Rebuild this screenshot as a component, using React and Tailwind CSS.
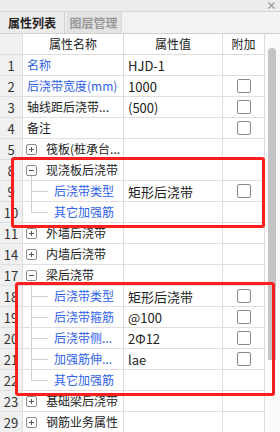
const rows = [
  { n: 1, name: '名称', blue: true, val: 'HJD-1' },
  { n: 2, name: '后浇带宽度(mm)', blue: true, val: '1000', cb: true },
  { n: 3, name: '轴线距后浇带...', val: '(500)', cb: true },
  { n: 4, name: '备注', cb: true },
  { n: 5, name: '筏板(桩承台...', tree: '+' },
  { n: 8, name: '现浇板后浇带', tree: '-' },
  { n: 9, name: '后浇带类型', child: 'mid', val: '矩形后浇带', cb: true },
  { n: 10, name: '其它加强筋', child: 'last' },
  { n: 11, name: '外墙后浇带', tree: '+' },
  { n: 14, name: '内墙后浇带', tree: '+' },
  { n: 17, name: '梁后浇带', tree: '-' },
  { n: 18, name: '后浇带类型', child: 'mid', val: '矩形后浇带', cb: true },
  { n: 19, name: '后浇带箍筋', child: 'mid', val: '@100', cb: true },
  { n: 20, name: '后浇带侧...', child: 'mid', val: '2Φ12', cb: true },
  { n: 21, name: '加强筋伸...', child: 'mid', val: 'lae', cb: true },
  { n: 22, name: '其它加强筋', child: 'last' },
  { n: 23, name: '基础梁后浇带', tree: '+' },
  { n: 29, name: '钢筋业务属性', tree: '+' },
];

const TreeBox = ({ sign }) => (
  <span className="w-[11px] h-[11px] border border-[#8c8c8c] rounded-[2px] bg-white flex items-center justify-center shrink-0 relative z-10">
    <span className="absolute w-[5px] h-px bg-[#555]" />
    {sign === '+' && <span className="absolute w-px h-[5px] bg-[#555]" />}
  </span>
);

const Checkbox = () => (
  <span className="w-[14px] h-[14px] border border-[#8a8a8a] rounded-[2px] bg-white" />
);

const NameCell = ({ row }) => {
  if (row.child) {
    return (
      <div className="relative h-full flex items-center pl-[31px]">
        <span
          className={
            row.child === 'last'
              ? 'absolute left-[8px] top-0 h-1/2 w-px bg-[#d0d0d0]'
              : 'absolute left-[8px] top-0 h-full w-px bg-[#d0d0d0]'
          }
        />
        <span className="absolute left-[8px] top-1/2 w-[17px] h-px bg-[#d0d0d0]" />
        <span className="text-[#2f62e9] whitespace-nowrap">{row.name}</span>
      </div>
    );
  }
  if (row.tree) {
    return (
      <div className="relative h-full flex items-center pl-[3px] gap-[9px]">
        {row.tree === '-' && (
          <span className="absolute left-[8px] top-1/2 h-1/2 w-px bg-[#d0d0d0]" />
        )}
        <TreeBox sign={row.tree} />
        <span className="text-[#222] whitespace-nowrap">{row.name}</span>
      </div>
    );
  }
  return (
    <div className="h-full flex items-center pl-[4px]">
      <span className={row.blue ? 'text-[#2f62e9] whitespace-nowrap' : 'text-[#222] whitespace-nowrap'}>
        {row.name}
      </span>
    </div>
  );
};

export default function App() {
  return (
    <div className="relative w-[280px] h-[432px] overflow-hidden bg-white font-['Noto_Sans_CJK_SC',sans-serif] text-[12px] leading-none text-[#222]">
      {/* title bar */}
      <div className="h-[12px] bg-[#ececec] border-b border-[#d4d4d4] flex items-center justify-end pr-[5px]">
        <svg width="7" height="7" viewBox="0 0 7 7" stroke="#9a9a9a" strokeWidth="1.2">
          <path d="M0.5 0.5 L6.5 6.5 M6.5 0.5 L0.5 6.5" />
        </svg>
      </div>

      {/* tabs */}
      <div className="h-[22px] bg-[#f2f2f2] border-b border-[#d0d0d0] flex items-stretch">
        <div className="w-[65px] bg-[#ebebeb] border-r border-[#cfcfcf] flex items-center justify-center font-bold text-[#222] text-[12px]">
          属性列表
        </div>
        <div className="w-[56px] ml-[1px] bg-[#e3e3e3] border-r border-[#d6d6d6] flex items-center justify-center font-bold text-[#9a9a9a] text-[12px]">
          图层管理
        </div>
      </div>

      <div className="flex">
        <div className="flex-1">
          {/* header */}
          <div className="flex h-[21px] border-b border-[#dcdcdc]">
            <div className="w-[23px] bg-[#f0f0f0] border-r border-[#dcdcdc]" />
            <div className="w-[101px] border-r border-[#dcdcdc] flex items-center justify-center">属性名称</div>
            <div className="w-[99px] border-r border-[#dcdcdc] flex items-center justify-center">属性值</div>
            <div className="w-[42px] border-r border-[#dcdcdc] flex items-center justify-center">附加</div>
          </div>
          {rows.map((row) => (
            <div key={row.n} className="flex h-[21px] border-b border-[#dedede]">
              <div className="w-[23px] bg-[#f0f0f0] border-r border-[#dcdcdc] flex items-center justify-center text-[#333] text-[13px]">
                {row.n}
              </div>
              <div className="w-[101px] border-r border-[#dcdcdc] overflow-hidden">
                <NameCell row={row} />
              </div>
              <div className="w-[99px] border-r border-[#dcdcdc] flex items-center pl-[4px] whitespace-nowrap text-[13px]">
                {row.val}
              </div>
              <div className="w-[42px] border-r border-[#dcdcdc] flex items-center justify-center">
                {row.cb && <Checkbox />}
              </div>
            </div>
          ))}
        </div>

        {/* scrollbar */}
        <div className="w-[15px] bg-[#fafafa] pt-[14px] pl-[3px]">
          <div className="w-[8px] h-[312px] rounded-t-full rounded-b-[3px] bg-[#c4c4c4]" />
        </div>
      </div>

      {/* highlight boxes */}
      <div className="absolute left-[11px] top-[157px] w-[254px] h-[71px] border-[3px] border-[#ff1e1e] rounded-[3px] pointer-events-none" />
      <div className="absolute left-[15px] top-[282px] w-[260px] h-[114px] border-[3px] border-[#ff1e1e] rounded-[3px] pointer-events-none" />
    </div>
  );
}
